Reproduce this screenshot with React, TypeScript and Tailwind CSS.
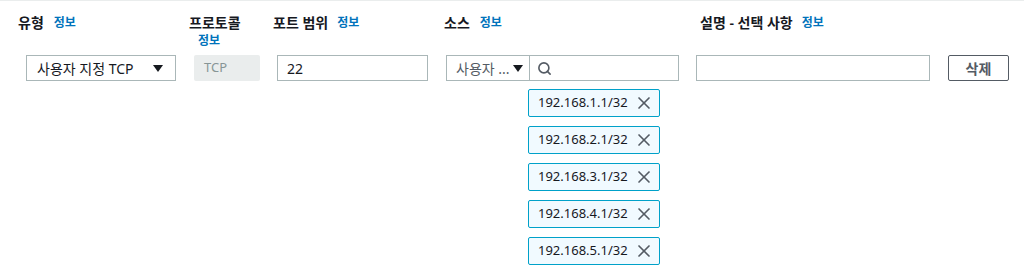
import { Search, X } from 'lucide-react';

const sources: string[] = [
  '192.168.1.1/32',
  '192.168.2.1/32',
  '192.168.3.1/32',
  '192.168.4.1/32',
  '192.168.5.1/32',
];

function Info() {
  return <span className="text-[12px] leading-[20px] font-bold text-[#0073bb]">정보</span>;
}

function Caret() {
  return (
    <svg width="10" height="7" viewBox="0 0 10 7">
      <path d="M0 0 L10 0 L5 7 Z" fill="#16191f" />
    </svg>
  );
}

function Label({ text, gap, pad = '' }: { text: string; gap: string; pad?: string }) {
  return (
    <div className={`h-[54px] pt-[12px] ${pad}`}>
      <div className={`flex items-center h-[20px] ${gap}`}>
        <span className="text-[14px] leading-[20px] font-semibold">{text}</span>
        <Info />
      </div>
    </div>
  );
}

export default function App() {
  return (
    <div
      className="w-[1024px] h-[277px] bg-white border-t border-[#eaeded] text-[#16191f] overflow-hidden"
      style={{ fontFamily: '"Noto Sans", "Noto Sans CJK KR", sans-serif' }}
    >
      <div className="flex pl-[18px]">
        {/* 유형 */}
        <div className="w-[171px] flex flex-col">
          <Label text="유형" gap="gap-[10px]" />
          <div className="ml-[8px] w-[150px] h-[26px] border border-[#aab7b8] flex items-center justify-between pl-[10px] pr-[12px] text-[14px]">
            <span>사용자 지정 TCP</span>
            <Caret />
          </div>
        </div>

        {/* 프로토콜 */}
        <div className="w-[84px] flex flex-col">
          <div className="h-[54px] pt-[12px] flex flex-col">
            <span className="text-[14px] font-semibold leading-[20px]">프로토콜</span>
            <span className="pl-[9px] leading-[16px] -mt-[2px]"><Info /></span>
          </div>
          <div className="ml-[5px] w-[66px] h-[26px] bg-[#eaeded] rounded-[2px] flex items-center pl-[10px] text-[13px] text-[#879596]">
            TCP
          </div>
        </div>

        {/* 포트 범위 */}
        <div className="w-[171px] flex flex-col">
          <Label text="포트 범위" gap="gap-[9px]" />
          <div className="ml-[4px] w-[151px] h-[26px] border border-[#aab7b8] flex items-center pl-[9px] text-[14px]">
            22
          </div>
        </div>

        {/* 소스 */}
        <div className="w-[252px] flex flex-col">
          <Label text="소스" gap="gap-[10px]" />
          <div className="ml-[2px] flex h-[26px]">
            <div className="w-[84px] border border-[#aab7b8] flex items-center justify-between pl-[9px] pr-[6px] text-[14px] text-[#545b64]">
              <span>사용자 ...</span>
              <Caret />
            </div>
            <div className="w-[149px] border border-l-0 border-[#aab7b8] flex items-center pl-[7px]">
              <Search size={15} strokeWidth={2.6} color="#545b64" />
            </div>
          </div>
          <div className="ml-[84px] mt-[8px] flex flex-col gap-[9px]">
            {sources.map((ip) => (
              <div
                key={ip}
                className="w-[132px] h-[28px] border border-[#00a1c9] bg-[#f1faff] rounded-[2px] flex items-center justify-between pl-[9px] pr-[5px] text-[13px]"
              >
                <span>{ip}</span>
                <X size={20} strokeWidth={2} color="#545b64" />
              </div>
            ))}
          </div>
        </div>

        {/* 설명 */}
        <div className="flex flex-col">
          <Label text="설명 - 선택 사항" gap="gap-[9px]" pad="pl-[4px]" />
          <div className="flex items-center">
            <div className="w-[234px] h-[26px] border border-[#aab7b8]" />
            <button className="ml-[18px] w-[61px] h-[26px] border border-[#545b64] rounded-[2px] text-[14px] font-semibold text-[#545b64] flex items-center justify-center">
              삭제
            </button>
          </div>
        </div>
      </div>
    </div>
  );
}
